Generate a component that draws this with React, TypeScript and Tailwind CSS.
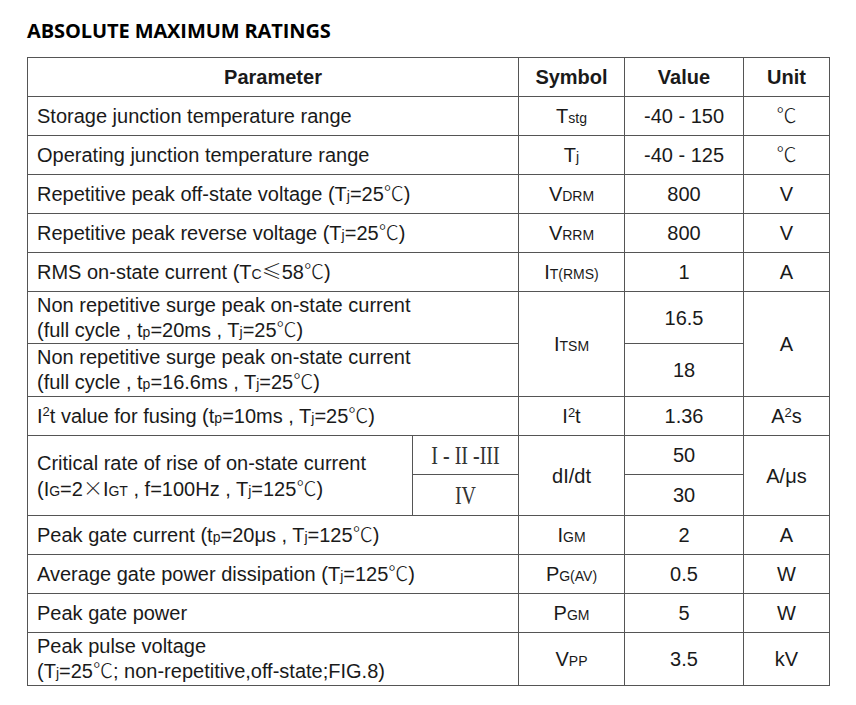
import type { ReactNode } from "react";

const cell = "border border-[#555] px-[9px] align-middle";
const center = `${cell} text-center`;
const roman = `${center} font-['Liberation_Serif',serif] text-[20px] text-[#333]`;

function Sub({ children }: { children: ReactNode }) {
  return <span className="text-[14px] leading-none">{children}</span>;
}

function Sup({ children }: { children: ReactNode }) {
  return <sup className="text-[13px] leading-none">{children}</sup>;
}

function Cjk({ children }: { children: ReactNode }) {
  return (
    <span className="font-['Noto_Sans_CJK_SC',sans-serif] font-light leading-none">
      {children}
    </span>
  );
}

const deg = <Cjk>℃</Cjk>;

function Row({
  h,
  param,
  symbol,
  value,
  unit,
}: {
  h: string;
  param: ReactNode;
  symbol: ReactNode;
  value: ReactNode;
  unit: ReactNode;
}) {
  return (
    <tr className={h}>
      <td colSpan={2} className={`${cell} leading-[25px]`}>
        {param}
      </td>
      <td className={center}>{symbol}</td>
      <td className={center}>{value}</td>
      <td className={center}>{unit}</td>
    </tr>
  );
}

export default function App() {
  return (
    <div className="min-h-screen bg-white px-[27px] pt-[18px] text-[#1a1a1a]">
      <h1 className="font-['Open_Sans',sans-serif] text-[20px] font-bold leading-[26px] tracking-[-0.1px] text-black">
        ABSOLUTE MAXIMUM RATINGS
      </h1>

      <table className="mt-[13px] w-[802px] table-fixed border-collapse font-['Liberation_Sans',Arial,sans-serif] text-[20px] leading-[24px]">
        <colgroup>
          <col className="w-[385px]" />
          <col className="w-[106px]" />
          <col className="w-[106px]" />
          <col className="w-[119px]" />
          <col className="w-[86px]" />
        </colgroup>
        <thead>
          <tr className="h-[39px] font-bold">
            <th colSpan={2} className={center}>Parameter</th>
            <th className={center}>Symbol</th>
            <th className={center}>Value</th>
            <th className={center}>Unit</th>
          </tr>
        </thead>
        <tbody>
          <Row
            h="h-[39px]"
            param="Storage junction temperature range"
            symbol={<>T<Sub>stg</Sub></>}
            value="-40 - 150"
            unit={deg}
          />
          <Row
            h="h-[39px]"
            param="Operating junction temperature range"
            symbol={<>T<Sub>j</Sub></>}
            value="-40 - 125"
            unit={deg}
          />
          <Row
            h="h-[39px]"
            param={<>Repetitive peak off-state voltage (T<Sub>j</Sub>=25{deg})</>}
            symbol={<>V<Sub>DRM</Sub></>}
            value="800"
            unit="V"
          />
          <Row
            h="h-[39px]"
            param={<>Repetitive peak reverse voltage (T<Sub>j</Sub>=25{deg})</>}
            symbol={<>V<Sub>RRM</Sub></>}
            value="800"
            unit="V"
          />
          <Row
            h="h-[39px]"
            param={<>RMS on-state current (T<Sub>C</Sub><Cjk>≤</Cjk>58{deg})</>}
            symbol={<>I<Sub>T(RMS)</Sub></>}
            value="1"
            unit="A"
          />

          <tr className="h-[52px]">
            <td colSpan={2} className={`${cell} leading-[25px]`}>
              Non repetitive surge peak on-state current
              <br />
              (full cycle , t<Sub>p</Sub>=20ms , T<Sub>j</Sub>=25{deg})
            </td>
            <td rowSpan={2} className={center}>
              I<Sub>TSM</Sub>
            </td>
            <td className={center}>16.5</td>
            <td rowSpan={2} className={center}>A</td>
          </tr>
          <tr className="h-[53px]">
            <td colSpan={2} className={`${cell} leading-[25px]`}>
              Non repetitive surge peak on-state current
              <br />
              (full cycle , t<Sub>p</Sub>=16.6ms , T<Sub>j</Sub>=25{deg})
            </td>
            <td className={center}>18</td>
          </tr>

          <Row
            h="h-[39px]"
            param={<>I<Sup>2</Sup>t value for fusing (t<Sub>p</Sub>=10ms , T<Sub>j</Sub>=25{deg})</>}
            symbol={<>I<Sup>2</Sup>t</>}
            value="1.36"
            unit={<>A<Sup>2</Sup>s</>}
          />

          <tr className="h-[39px]">
            <td rowSpan={2} className={`${cell} leading-[26px]`}>
              Critical rate of rise of on-state current
              <br />
              (I<Sub>G</Sub>=2<Cjk>×</Cjk>I<Sub>GT</Sub> , f=100Hz , T<Sub>j</Sub>=125{deg})
            </td>
            <td className={roman}>
              <span className="inline-block scale-y-125">I - II -III</span>
            </td>
            <td rowSpan={2} className={center}>dI/dt</td>
            <td className={center}>50</td>
            <td rowSpan={2} className={center}>A/μs</td>
          </tr>
          <tr className="h-[41px]">
            <td className={roman}>
              <span className="inline-block scale-y-125">IV</span>
            </td>
            <td className={center}>30</td>
          </tr>

          <Row
            h="h-[39px]"
            param={<>Peak gate current (t<Sub>p</Sub>=20μs , T<Sub>j</Sub>=125{deg})</>}
            symbol={<>I<Sub>GM</Sub></>}
            value="2"
            unit="A"
          />
          <Row
            h="h-[39px]"
            param={<>Average gate power dissipation (T<Sub>j</Sub>=125{deg})</>}
            symbol={<>P<Sub>G(AV)</Sub></>}
            value="0.5"
            unit="W"
          />
          <Row
            h="h-[39px]"
            param="Peak gate power"
            symbol={<>P<Sub>GM</Sub></>}
            value="5"
            unit="W"
          />
          <Row
            h="h-[53px]"
            param={
              <>
                Peak pulse voltage
                <br />
                (T<Sub>j</Sub>=25{deg}; non-repetitive,off-state;FIG.8)
              </>
            }
            symbol={<>V<Sub>PP</Sub></>}
            value="3.5"
            unit="kV"
          />
        </tbody>
      </table>
    </div>
  );
}
